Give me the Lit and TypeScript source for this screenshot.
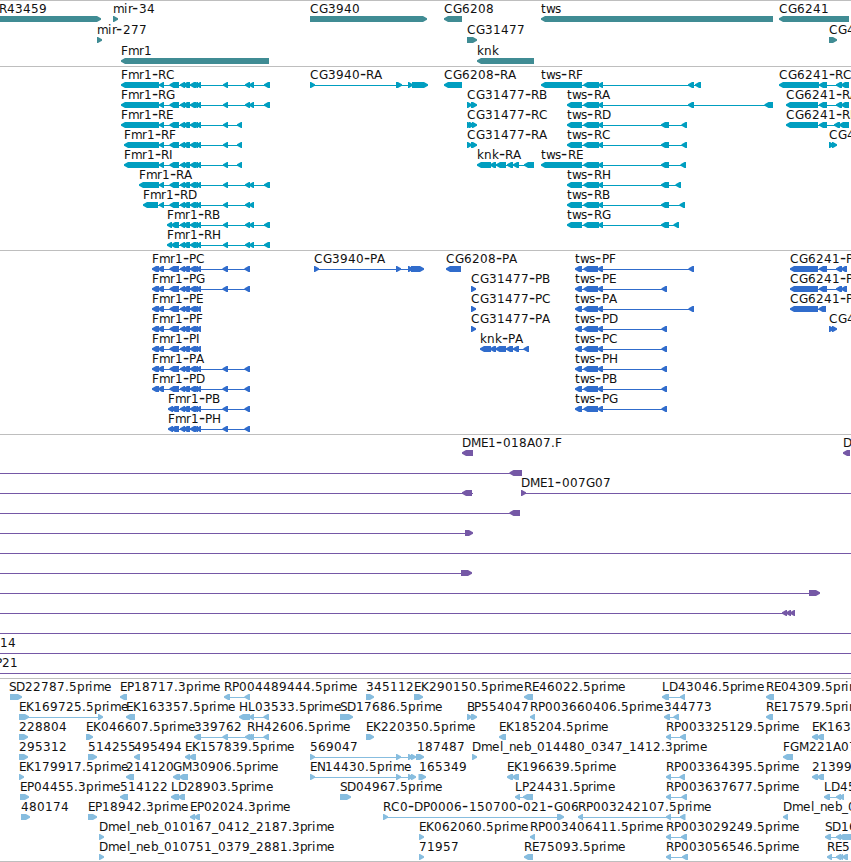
import {css, html, svg, LitElement} from 'lit';
import {customElement, property} from 'lit/decorators.js';

type Block = [number, number];

interface Feature {
  row: number;
  x: number;
  label: string;
  dir: '<' | '>' | '-';
  blocks: Block[];
  // extent of the connecting line, when it is longer than the blocks
  line?: Block;
}

interface Track {
  name: string;
  height: number;
  pitch: number;
  features: Feature[];
}

// label advances, whole label is laid out glyph by glyph
const ADVANCE: Record<string, number> = {
  A: 8.2, B: 7, C: 8.5, D: 9, E: 7, F: 6.5, G: 9, H: 9, I: 3.4, K: 8, L: 6.7,
  M: 10.3, P: 7, R: 8, S: 7, b: 7.6, e: 7.2, i: 3.3, k: 7, l: 3.3, m: 11.3,
  n: 7.6, p: 7.6, r: 4.8, s: 6.2, t: 4.6, w: 9.4, '.': 4, '-': 6.5, '_': 5.9
};

const f = (row: number, x: number, label: string, dir: Feature['dir'], blocks: Block[], line?: Block): Feature =>
  ({row, x, label, dir, blocks, line});

const GENES: Feature[] = [
  f(0, -1, 'R43459', '>', [[-10, 101]]),
  f(0, 113, 'mir-34', '>', [[113, 118]]),
  f(1, 97, 'mir-277', '>', [[97, 102]]),
  f(2, 121, 'Fmr1', '<', [[121, 269]]),
  f(0, 310, 'CG3940', '>', [[310, 427]]),
  f(0, 444, 'CG6208', '<', [[444, 462]]),
  f(1, 467, 'CG31477', '>', [[467, 477]]),
  f(2, 477, 'knk', '<', [[477, 534]]),
  f(0, 541, 'tws', '<', [[541, 773]]),
  f(0, 779, 'CG6241', '<', [[779, 849]]),
  f(1, 829, 'CG4', '>', [[829, 837]])
];

const FMR_MID: Block[] = [[180, 185], [183, 190], [190, 196], [193, 198], [196, 201]];
const FMR: Block[] = [[159, 164], [169.5, 179], ...FMR_MID, [223, 228]];
const FMR_LONG: Block[] = [...FMR, [245, 250], [249, 254], [264, 270]];
const FMR_SHORT: Block[] = [...FMR, [237, 242]];
const FMR_TAIL: Block[] = [[167, 172], [171, 179], ...FMR_MID, [223, 228], [245, 250], [249, 254], [264, 270]];
const TWS_LONG: Block[] = [[541, 582], [583.5, 599], [598, 603]];
const TWS: Block[] = [[567, 582], [583.5, 599], [598, 603]];

const TRANSCRIPTS: Feature[] = [
  f(0, 121, 'Fmr1-RC', '<', [[121, 159], ...FMR_LONG]),
  f(1, 121, 'Fmr1-RG', '<', [[121, 159], ...FMR_LONG]),
  f(2, 121, 'Fmr1-RE', '<', [[121, 159], ...FMR_SHORT]),
  f(3, 124, 'Fmr1-RF', '<', [[124, 159], ...FMR_SHORT]),
  f(4, 124, 'Fmr1-RI', '<', [[124, 159], ...FMR_SHORT]),
  f(5, 139, 'Fmr1-RA', '<', [[139, 159], ...FMR_LONG]),
  f(6, 143, 'Fmr1-RD', '<', [[143, 158], ...FMR, [245, 250], [249, 254]]),
  f(7, 167, 'Fmr1-RB', '<', FMR_TAIL),
  f(8, 167, 'Fmr1-RH', '<', FMR_TAIL),
  f(0, 310, 'CG3940-RA', '>', [[310, 315], [396, 402], [408, 413], [412, 428]]),
  f(0, 444, 'CG6208-RA', '<', [[444, 462]]),
  f(1, 467, 'CG31477-RB', '>', [[467, 472], [471, 477]]),
  f(2, 467, 'CG31477-RC', '>', [[467, 472], [469, 474], [472, 477]]),
  f(3, 467, 'CG31477-RA', '>', [[467, 472], [471, 477]]),
  f(4, 477, 'knk-RA', '<', [[477, 491], [490, 496], [496, 506], [507, 513], [513, 519], [524, 534]]),
  f(0, 541, 'tws-RF', '<', [...TWS_LONG, [688, 694], [695, 701]]),
  f(1, 567, 'tws-RA', '<', [...TWS, [688, 694], [764.5, 773]]),
  f(2, 567, 'tws-RD', '<', [...TWS, [661, 669], [681.5, 687]]),
  f(3, 567, 'tws-RC', '<', [...TWS, [661, 669], [681.5, 687]]),
  f(4, 541, 'tws-RE', '<', [...TWS_LONG, [661, 669], [680.5, 686]]),
  f(5, 567, 'tws-RH', '<', [...TWS, [661, 669], [675.5, 681]]),
  f(6, 567, 'tws-RB', '<', [...TWS, [661, 669], [679.5, 685]]),
  f(7, 567, 'tws-RG', '<', [...TWS, [661, 669], [673.5, 679]]),
  f(0, 779, 'CG6241-RC', '<', [[779, 819], [819, 827], [836, 842], [841, 849]]),
  f(1, 786, 'CG6241-RA', '<', [[786, 818], [819, 827], [836, 842], [841, 849]]),
  f(2, 786, 'CG6241-RB', '<', [[786, 818], [819, 827], [834, 840], [839, 849]]),
  f(3, 829, 'CG4', '>', [[829, 834], [832, 837]])
];

const PEP_SHORT: Block[] = [[152, 159], [158, 164], [169.5, 179], ...FMR_MID];
const PEP_LONG: Block[] = [...PEP_SHORT, [222.5, 228], [244.5, 250]];
const PEP_TAIL: Block[] = [[168, 173], [171, 179], ...FMR_MID, [222.5, 228], [244.5, 250]];
const TWS_PEP: Block[] = [[575, 582], [583.5, 598], [597.5, 603]];

const PROTEINS: Feature[] = [
  f(0, 152, 'Fmr1-PC', '<', PEP_LONG),
  f(1, 152, 'Fmr1-PG', '<', PEP_LONG),
  f(2, 152, 'Fmr1-PE', '<', PEP_SHORT),
  f(3, 152, 'Fmr1-PF', '<', PEP_SHORT),
  f(4, 152, 'Fmr1-PI', '<', PEP_SHORT),
  f(5, 152, 'Fmr1-PA', '<', PEP_LONG),
  f(6, 152, 'Fmr1-PD', '<', PEP_LONG),
  f(7, 168, 'Fmr1-PB', '<', PEP_TAIL),
  f(8, 168, 'Fmr1-PH', '<', PEP_TAIL),
  f(0, 314, 'CG3940-PA', '>', [[314, 319], [396, 401], [408, 413], [411, 424]]),
  f(0, 446, 'CG6208-PA', '<', [[446, 461]]),
  f(1, 471, 'CG31477-PB', '>', [[471, 476]]),
  f(2, 471, 'CG31477-PC', '>', [[471, 476]]),
  f(3, 471, 'CG31477-PA', '>', [[471, 476]]),
  f(4, 480, 'knk-PA', '<', [[480, 491], [490, 496], [495.5, 506], [506, 513], [513, 519], [523.5, 529]]),
  f(0, 575, 'tws-PF', '<', [...TWS_PEP, [688.5, 694]]),
  f(1, 575, 'tws-PE', '<', [...TWS_PEP, [661.5, 667]]),
  f(2, 575, 'tws-PA', '<', [...TWS_PEP, [688.5, 694]]),
  f(3, 575, 'tws-PD', '<', [...TWS_PEP, [661.5, 667]]),
  f(4, 575, 'tws-PC', '<', [...TWS_PEP, [661.5, 667]]),
  f(5, 575, 'tws-PH', '<', [...TWS_PEP, [661.5, 667]]),
  f(6, 575, 'tws-PB', '<', [...TWS_PEP, [661.5, 667]]),
  f(7, 575, 'tws-PG', '<', [...TWS_PEP, [661.5, 667]]),
  f(0, 790, 'CG6241-PC', '<', [[790, 818], [819, 827], [836, 842], [841, 847]]),
  f(1, 790, 'CG6241-PA', '<', [[790, 818], [819, 827], [836, 842], [841, 847]]),
  f(2, 790, 'CG6241-PB', '<', [[790, 818], [818.5, 826]]),
  f(3, 829, 'CG4', '>', [[829, 834], [832, 837]])
];

const CLONES: Feature[] = [
  f(0, 462, 'DME1-018A07.F', '<', [[462, 473]]),
  f(0, 843, 'D', '<', [[843, 850]]),
  f(1, 0, '', '<', [[509.5, 522]], [0, 515]),
  f(2, 0, '', '<', [[462, 472]], [0, 473]),
  f(2, 521, 'DME1-007G07', '>', [[521, 526]], [521, 851]),
  f(3, 0, '', '<', [[509.5, 520]], [0, 515]),
  f(4, 0, '', '>', [[465, 473]], [0, 467]),
  f(5, 0, '', '-', [], [0, 851]),
  f(6, 0, '', '>', [[461, 472]], [0, 465]),
  f(7, 0, '', '>', [[809, 820]], [0, 812]),
  f(8, 0, '', '<', [[782, 787], [786, 791], [790, 795]], [0, 790]),
  f(9, 0, '', '-', [], [0, 851]),
  f(10, 0, '14', '-', [], [0, 851]),
  f(11, -5, 'P21', '-', [], [0, 851])
];

const ESTS: Feature[] = [
  f(0, 9, 'SD22787.5prime', '>', [[10, 22]]),
  f(0, 120, 'EP18717.3prime', '<', [[120, 127]]),
  f(0, 224, 'RP004489444.5prime', '<', [[224, 230], [244.5, 250]]),
  f(0, 366, '345112', '>', [[366, 374]]),
  f(0, 414, 'EK290150.5prime', '>', [[414, 423]]),
  f(0, 524, 'RE46022.5prime', '<', [[524, 533]]),
  f(0, 662, 'LD43046.5prime', '<', [[662, 669], [680, 685]]),
  f(0, 766, 'RE04309.5prime', '<', [[766, 774]]),
  f(1, 19, 'EK169725.5prime', '>', [[19, 29], [98, 103]]),
  f(1, 126, 'EK163357.5prime', '<', [[126, 135]]),
  f(1, 239, 'HL03533.5prime', '<', [[239, 250], [249, 254], [263.5, 269]]),
  f(1, 340, 'SD17686.5prime', '>', [[340, 353]]),
  f(1, 467, 'BP554047', '>', [[467, 472], [471, 477]]),
  f(1, 530, 'RP003660406.5prime', '<', [[530, 535]]),
  f(1, 664, '344773', '<', [[664, 670], [673.5, 679]]),
  f(1, 766, 'RE17579.5prime', '<', [[766, 773]]),
  f(2, 19, '228804', '>', [[19, 28]]),
  f(2, 86, 'EK046607.5prime', '>', [[86, 93]]),
  f(2, 194, '339762', '<', [[194, 201], [222.5, 228], [245, 250]]),
  f(2, 247, 'RH42606.5prime', '<', [[247, 252], [249, 254], [263.5, 269]]),
  f(2, 366, 'EK220350.5prime', '>', [[366, 374]]),
  f(2, 499, 'EK185204.5prime', '<', [[499, 506]]),
  f(2, 666, 'RP003325129.5prime', '<', [[666, 671], [680, 686]]),
  f(2, 812, 'EK163', '<', [[812, 818], [817, 824]]),
  f(3, 19, '295312', '>', [[19, 28]]),
  f(3, 88, '514255', '>', [[88, 97]]),
  f(3, 134, '495494', '<', [[134, 140]]),
  f(3, 185, 'EK157839.5prime', '<', [[185, 190], [189, 196]]),
  f(3, 310, '569047', '>', [[310, 315], [396, 401], [408, 413], [411, 416]]),
  f(3, 417, '187487', '>', [[416, 424]]),
  f(3, 472, 'Dmel_neb_014480_0347_1412.3prime', '>', [[472, 477]]),
  f(3, 783, 'FGM221A07', '<', [[783, 793]]),
  f(4, 19, 'EK179917.5prime', '>', [[19, 24]]),
  f(4, 126, '214120', '<', [[126, 134]]),
  f(4, 173, 'GM30906.5prime', '<', [[173, 180], [179, 188]]),
  f(4, 310, 'EN14430.5prime', '>', [[310, 315], [396, 401], [408, 413], [411, 416]]),
  f(4, 419, '165349', '>', [[418.5, 426]]),
  f(4, 507, 'EK196639.5prime', '<', [[507, 513], [512, 519]]),
  f(4, 666, 'RP003364395.5prime', '<', [[666, 671], [679.5, 685]]),
  f(4, 812, '21399', '<', [[812, 818], [817, 824]]),
  f(5, 20, 'EP04455.3prime', '>', [[20, 29]]),
  f(5, 120, '514122', '<', [[120, 128]]),
  f(5, 171, 'LD28903.5prime', '<', [[171, 179], [178, 185]]),
  f(5, 340, 'SD04967.5prime', '>', [[340, 351]]),
  f(5, 515, 'LP24431.5prime', '<', [[515, 520], [523, 533]]),
  f(5, 666, 'RP003637677.5prime', '<', [[666, 671], [681.5, 687]]),
  f(5, 824, 'LD45', '<', [[824, 830], [836, 841], [839, 844]]),
  f(6, 21, '480174', '>', [[21, 30]]),
  f(6, 88, 'EP18942.3prime', '>', [[88, 97]]),
  f(6, 190, 'EP02024.3prime', '<', [[190, 195], [194, 200]]),
  f(6, 383, 'RC0-DP0006-150700-021-G06', '>', [[383, 388], [557, 564]]),
  f(6, 578, 'RP003242107.5prime', '<', [[578, 583], [666, 671], [680, 685.5]]),
  f(6, 783, 'Dmel_neb_0', '<', [[783, 788]]),
  f(7, 99, 'Dmel_neb_010167_0412_2187.3prime', '>', [[99, 104]]),
  f(7, 419, 'EK062060.5prime', '>', [[419, 424]]),
  f(7, 530, 'RP003406411.5prime', '<', [[530, 535]]),
  f(7, 666, 'RP003029249.5prime', '<', [[666, 671], [681, 687]]),
  f(7, 825, 'SD16', '<', [[825, 831], [836, 841], [839, 851]]),
  f(8, 99, 'Dmel_neb_010751_0379_2881.3prime', '>', [[99, 104]]),
  f(8, 419, '71957', '>', [[419, 424]]),
  f(8, 524, 'RE75093.5prime', '<', [[524, 533]]),
  f(8, 666, 'RP003056546.5prime', '<', [[666, 671], [682, 688]]),
  f(8, 827, 'RE5', '<', [[827, 832], [836, 841], [839, 843], [842, 848]])
];

const TRACKS: Track[] = [
  {name: 'gene', height: 66, pitch: 21, features: GENES},
  {name: 'transcript', height: 184, pitch: 20, features: TRANSCRIPTS},
  {name: 'protein', height: 184, pitch: 20, features: PROTEINS},
  {name: 'clone', height: 244, pitch: 20, features: CLONES},
  {name: 'est', height: 183, pitch: 20, features: ESTS}
];

@customElement('feature-track')
class FeatureTrack extends LitElement {
  @property({attribute: false}) track!: Track;

  static styles = css`
    :host {
      display: block;
    }

    .track {
      display: block;
      width: 100%;
    }

    .border {
      fill: #bebebe;
    }

    .label {
      fill: #111;
      font-family: "DejaVu Sans", sans-serif;
      font-size: 12px;
    }

    .dash {
      font-size: 17px;
    }

    .gene {
      fill: #408c94;
    }

    .transcript {
      fill: #009ec0;
    }

    .protein {
      fill: #306ccc;
    }

    .clone {
      fill: #7558a6;
    }

    .est {
      fill: #87bddf;
    }
  `;

  blockPath([a, b]: Block, dir: string) {
    const head = Math.min(5, b - a);
    return dir === '<'
      ? `M${a} 18.2L${a + head * 0.8} 16H${b}V22H${a + head * 0.8}L${a} 19.8Z`
      : `M${b} 18.2L${b - head * 0.8} 16H${a}V22H${b - head * 0.8}L${b} 19.8Z`;
  }

  renderShape(feature: Feature) {
    const {blocks, dir} = feature;
    const [from, to] = feature.line ?? [blocks[0][0] + 2, blocks[blocks.length - 1][1] - 1];
    const hasLine = feature.line || blocks.length > 1;
    return svg`
      <g transform="translate(0 ${feature.row * this.track.pitch})">
        ${hasLine ? svg`<rect x=${from} y="19" width=${to - from} height="1"></rect>` : ''}
        ${blocks.map(b => svg`<path d=${this.blockPath(b, dir)}></path>`)}
      </g>`;
  }

  renderLabel(feature: Feature) {
    if (!feature.label) return '';
    let pos = feature.x;
    // dashes are drawn wider than the other glyphs, so they get their own span
    const parts = feature.label.split(/(-)/).map(part => {
      const xs = [...part].map(ch => {
        const at = Math.round(pos);
        pos += ADVANCE[ch] ?? 8;
        return at;
      });
      return svg`<tspan class=${part === '-' ? 'dash' : ''} x=${xs.join(' ')}>${part}</tspan>`;
    });
    return svg`<text class="label" y=${feature.row * this.track.pitch + 13}>${parts}</text>`;
  }

  render() {
    const {name, height, features} = this.track;
    return html`
      <svg class="track" height=${height}>
        <rect class="border" width="100%" height="1"></rect>
        <g class=${name}>${features.map(item => this.renderShape(item))}</g>
        ${features.map(item => this.renderLabel(item))}
      </svg>
    `;
  }
}

@customElement('app-root')
class AppRoot extends LitElement {
  static styles = css`
    :host {
      display: flex;
      flex-direction: column;
      height: 862px;
      box-sizing: border-box;
      overflow: hidden;
      background: #fff;
      border-bottom: 1px solid #bebebe;
    }
  `;

  render() {
    return TRACKS.map(track => html`<feature-track .track=${track}></feature-track>`);
  }
}
